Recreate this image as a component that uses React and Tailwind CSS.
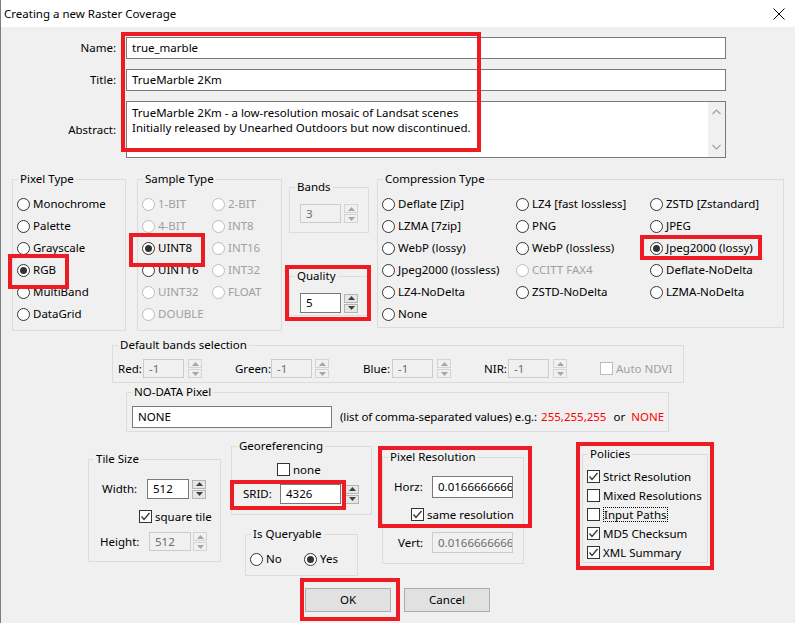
import React from 'react'

const RED_BOXES = [
  'left-[120px] top-[32px] w-[360px] h-[120px]',
  'left-[7px] top-[254px] w-[61px] h-[35px]',
  'left-[128px] top-[233px] w-[76px] h-[34px]',
  'left-[284px] top-[265px] w-[86px] h-[56px]',
  'left-[639px] top-[235px] w-[122px] h-[25px]',
  'left-[229px] top-[480px] w-[116px] h-[30px]',
  'left-[377px] top-[446px] w-[154px] h-[82px]',
  'left-[575px] top-[442px] w-[138px] h-[128px]',
  'left-[299px] top-[578px] w-[100px] h-[43px]',
]

function Group({ title, className = '', children }) {
  return (
    <fieldset className={`shrink-0 border border-[#dcdcdc] ${className}`}>
      <legend className="ml-[5px] px-[2px] leading-[16px]">{title}</legend>
      {children}
    </fieldset>
  )
}

function Radio({ label, checked, disabled, className = '' }) {
  return (
    <div className={`flex h-[22px] items-center whitespace-nowrap ${className}`}>
      <span
        className={`flex h-[13px] w-[13px] shrink-0 items-center justify-center rounded-full border bg-white ${
          disabled ? 'border-[#bcbcbc]' : 'border-[#333333]'
        }`}
      >
        {checked && <span className="h-[7px] w-[7px] rounded-full bg-[#333333]" />}
      </span>
      <span className={`ml-[3px] ${disabled ? 'text-[#a0a0a0]' : ''}`}>{label}</span>
    </div>
  )
}

function Check({ label, checked, disabled, focus, className = '' }) {
  return (
    <div className={`flex items-center whitespace-nowrap ${className}`}>
      <span
        className={`flex h-[13px] w-[13px] shrink-0 items-center justify-center border bg-white ${
          disabled ? 'border-[#bcbcbc]' : 'border-[#333333]'
        }`}
      >
        {checked && (
          <svg width="11" height="11" viewBox="0 0 11 11">
            <polyline points="1.5,5.5 4,8.5 9.5,2" fill="none" stroke="#333" strokeWidth="1.3" />
          </svg>
        )}
      </span>
      <span
        className={`ml-[3px] ${disabled ? 'text-[#a0a0a0]' : ''} ${
          focus ? 'border border-dotted border-black leading-[13px]' : ''
        }`}
      >
        {label}
      </span>
    </div>
  )
}

function Spinner({ disabled, className = '' }) {
  const arrow = disabled ? '#a6a6a6' : '#404040'
  const box = disabled ? 'border-[#d4d4d4] bg-[#f0f0f0]' : 'border-[#b4b4b4] bg-[#e6e6e6]'
  return (
    <div className={`flex w-[14px] shrink-0 flex-col gap-[1px] ${className}`}>
      <div className={`flex h-[9px] items-center justify-center border ${box}`}>
        <svg width="7" height="4" viewBox="0 0 7 4">
          <polygon points="0,4 3.5,0 7,4" fill={arrow} />
        </svg>
      </div>
      <div className={`flex h-[9px] items-center justify-center border ${box}`}>
        <svg width="7" height="4" viewBox="0 0 7 4">
          <polygon points="0,0 7,0 3.5,4" fill={arrow} />
        </svg>
      </div>
    </div>
  )
}

function Box({ value, disabled, className = '' }) {
  return (
    <div
      className={`flex shrink-0 items-center overflow-hidden whitespace-nowrap border pl-[5px] ${
        disabled ? 'border-[#cccccc] bg-[#f0f0f0] text-[#6d6d6d]' : 'border-[#7a7a7a] bg-white'
      } ${className}`}
    >
      {value}
    </div>
  )
}

function Chevron({ up }) {
  return (
    <svg width="9" height="6" viewBox="0 0 9 6">
      <polyline
        points={up ? '0.5,5 4.5,1 8.5,5' : '0.5,1 4.5,5 8.5,1'}
        fill="none"
        stroke="#a3a3a3"
        strokeWidth="1.2"
      />
    </svg>
  )
}

export default function App() {
  return (
    <div className="relative h-[623px] w-[795px] overflow-hidden border-l border-[#7d7d7d] bg-[#f0f0f0] font-['Noto_Sans',sans-serif] text-[11.5px] leading-[16px] text-black">
      {/* title bar */}
      <div className="flex h-[27px] items-center justify-between bg-white pl-[3px] pr-[10px]">
        <span>Creating a new Raster Coverage</span>
        <svg width="12" height="12" viewBox="0 0 12 12">
          <path d="M0.5 0.5 L11.5 11.5 M11.5 0.5 L0.5 11.5" stroke="#000" strokeWidth="1" />
        </svg>
      </div>

      {/* name / title / abstract */}
      <div className="mt-[10px] flex items-center">
        <span className="w-[115px] text-right">Name:</span>
        <Box value="true_marble" className="ml-[10px] h-[22px] w-[600px]" />
      </div>
      <div className="mt-[10px] flex items-center">
        <span className="w-[115px] text-right">Title:</span>
        <Box value="TrueMarble 2Km" className="ml-[10px] h-[22px] w-[600px]" />
      </div>
      <div className="mt-[10px] flex items-center">
        <span className="w-[115px] text-right">Abstract:</span>
        <div className="ml-[10px] flex h-[57px] w-[600px] border border-[#7a7a7a] bg-white">
          <div className="flex-1 pl-[5px] pt-[3px] leading-[15px]">
            <div>TrueMarble 2Km - a low-resolution mosaic of Landsat scenes</div>
            <div>Initially released by Unearhed Outdoors but now discontinued.</div>
          </div>
          <div className="flex w-[17px] flex-col items-center justify-between bg-[#f0f0f0] py-[7px]">
            <Chevron up />
            <Chevron />
          </div>
        </div>
      </div>

      {/* types row */}
      <div className="mt-[13px] flex items-start pl-[11px]">
        <Group title="Pixel Type" className="h-[160px] w-[114px]">
          <div className="mt-[6px] pl-[4px]">
            <Radio label="Monochrome" />
            <Radio label="Palette" />
            <Radio label="Grayscale" />
            <Radio label="RGB" checked />
            <Radio label="MultiBand" />
            <Radio label="DataGrid" />
          </div>
        </Group>

        <Group title="Sample Type" className="ml-[11px] h-[160px] w-[145px]">
          <div className="mt-[6px] grid grid-cols-[70px_auto] pl-[4px]">
            <Radio label="1-BIT" disabled />
            <Radio label="2-BIT" disabled />
            <Radio label="4-BIT" disabled />
            <Radio label="INT8" disabled />
            <Radio label="UINT8" checked />
            <Radio label="INT16" disabled />
            <Radio label="UINT16" />
            <Radio label="INT32" disabled />
            <Radio label="UINT32" disabled />
            <Radio label="FLOAT" disabled />
            <Radio label="DOUBLE" disabled />
          </div>
        </Group>

        <div className="ml-[7px] flex w-[80px] flex-col">
          <Group title="Bands" className="mt-[8px] h-[54px] w-[80px]">
            <div className="ml-[10px] mt-[9px] flex">
              <Box value="3" disabled className="h-[19px] w-[41px]" />
              <Spinner disabled className="ml-[3px]" />
            </div>
          </Group>
          <Group title="Quality" className="mt-[35px] h-[48px] w-[80px]">
            <div className="ml-[10px] mt-[9px] flex items-center">
              <Box value="5" className="h-[20px] w-[41px]" />
              <Spinner className="ml-[3px]" />
            </div>
          </Group>
        </div>

        <Group title="Compression Type" className="ml-[8px] h-[157px] w-[407px]">
          <div className="mt-[6px] grid grid-cols-[134px_134px_auto] pl-[4px]">
            <Radio label="Deflate [Zip]" />
            <Radio label="LZ4 [fast lossless]" />
            <Radio label="ZSTD [Zstandard]" />
            <Radio label="LZMA [7zip]" />
            <Radio label="PNG" />
            <Radio label="JPEG" />
            <Radio label="WebP (lossy)" />
            <Radio label="WebP (lossless)" />
            <Radio label="Jpeg2000 (lossy)" checked />
            <Radio label="Jpeg2000 (lossless)" />
            <Radio label="CCITT FAX4" disabled />
            <Radio label="Deflate-NoDelta" />
            <Radio label="LZ4-NoDelta" />
            <Radio label="ZSTD-NoDelta" />
            <Radio label="LZMA-NoDelta" />
            <Radio label="None" />
          </div>
        </Group>
      </div>

      {/* default bands */}
      <Group title="Default bands selection" className="ml-[111px] mt-[6px] h-[46px] w-[572px]">
        <div className="mt-[6px] flex items-center pl-[5px]">
          <span className="w-[25px]">Red:</span>
          <Box value="-1" disabled className="h-[19px] w-[41px]" />
          <Spinner disabled className="ml-[4px]" />
          <span className="ml-[33px] w-[36px]">Green:</span>
          <Box value="-1" disabled className="h-[19px] w-[41px]" />
          <Spinner disabled className="ml-[3px]" />
          <span className="ml-[34px] w-[29px]">Blue:</span>
          <Box value="-1" disabled className="h-[19px] w-[41px]" />
          <Spinner disabled className="ml-[4px]" />
          <span className="ml-[33px] w-[24px]">NIR:</span>
          <Box value="-1" disabled className="h-[19px] w-[41px]" />
          <Spinner disabled className="ml-[4px]" />
          <Check label="Auto NDVI" disabled className="ml-[33px]" />
        </div>
      </Group>

      {/* no-data */}
      <Group title="NO-DATA Pixel" className="ml-[125px] mt-[1px] h-[48px] w-[543px]">
        <div className="mt-[6px] flex items-center pl-[5px]">
          <Box value="NONE" className="h-[22px] w-[200px]" />
          <span className="ml-[8px] whitespace-nowrap tracking-[-0.1px]">
            (list of comma-separated values) e.g.:
          </span>
          <span className="ml-[4px] text-[#ff0000]">255,255,255</span>
          <span className="ml-[7px]">or</span>
          <span className="ml-[6px] text-[#ff0000]">NONE</span>
        </div>
      </Group>

      {/* bottom row */}
      <div className="flex items-start">
        <Group title="Tile Size" className="ml-[87px] mt-[19px] h-[111px] w-[133px]">
          <div className="mt-[12px] flex items-center pl-[13px]">
            <span className="w-[45px]">Width:</span>
            <Box value="512" className="h-[20px] w-[42px]" />
            <Spinner className="ml-[3px]" />
          </div>
          <Check label="square tile" checked className="ml-[50px] mt-[11px] h-[13px]" />
          <div className="mt-[9px] flex items-center pl-[11px]">
            <span className="w-[49px]">Height:</span>
            <Box value="512" disabled className="h-[19px] w-[42px]" />
            <Spinner disabled className="ml-[2px]" />
          </div>
        </Group>

        <div className="ml-[10px] flex w-[141px] flex-col">
          <Group title="Georeferencing" className="mt-[6px] h-[77px] w-[141px]">
            <Check label="none" className="ml-[45px] mt-[9px] h-[13px]" />
            <div className="mt-[8px] flex items-center pl-[11px]">
              <span className="w-[37px]">SRID:</span>
              <Box value="4326" className="h-[20px] w-[61px]" />
              <Spinner className="ml-[4px]" />
            </div>
          </Group>
          <Group title="Is Queryable" className="ml-[14px] mt-[11px] h-[50px] w-[113px]">
            <div className="mt-[6px] flex pl-[4px]">
              <Radio label="No" className="w-[54px]" />
              <Radio label="Yes" checked />
            </div>
          </Group>
        </div>

        <Group title="Pixel Resolution" className="ml-[10px] mt-[17px] h-[115px] w-[142px]">
          <div className="mt-[11px] flex items-center pl-[11px]">
            <span className="w-[38px]">Horz:</span>
            <Box value="0.0166666666666" className="h-[22px] w-[81px]" />
          </div>
          <Check label="same resolution" checked className="ml-[28px] mt-[10px] h-[13px]" />
          <div className="mt-[11px] flex items-center pl-[15px]">
            <span className="w-[34px]">Vert:</span>
            <Box value="0.0166666666666" disabled className="h-[21px] w-[81px]" />
          </div>
        </Group>

        <Group title="Policies" className="ml-[58px] mt-[14px] h-[117px] w-[126px]">
          <div className="mt-[5px] flex flex-col pl-[4px]">
            <Check label="Strict Resolution" checked className="h-[19px]" />
            <Check label="Mixed Resolutions" className="h-[19px]" />
            <Check label="Input Paths" focus className="h-[19px]" />
            <Check label="MD5 Checksum" checked className="h-[19px]" />
            <Check label="XML Summary" checked className="h-[19px]" />
          </div>
        </Group>
      </div>

      {/* buttons */}
      <div className="mt-[12px] flex">
        <button
          type="button"
          className="ml-[304px] h-[24px] w-[86px] border border-[#adadad] bg-[#e1e1e1]"
        >
          OK
        </button>
        <button
          type="button"
          className="ml-[13px] h-[24px] w-[86px] border border-[#adadad] bg-[#e1e1e1]"
        >
          Cancel
        </button>
      </div>

      {/* highlight frames */}
      {RED_BOXES.map((c) => (
        <div key={c} className={`pointer-events-none absolute border-4 border-[#ed1c24] ${c}`} />
      ))}
    </div>
  )
}
